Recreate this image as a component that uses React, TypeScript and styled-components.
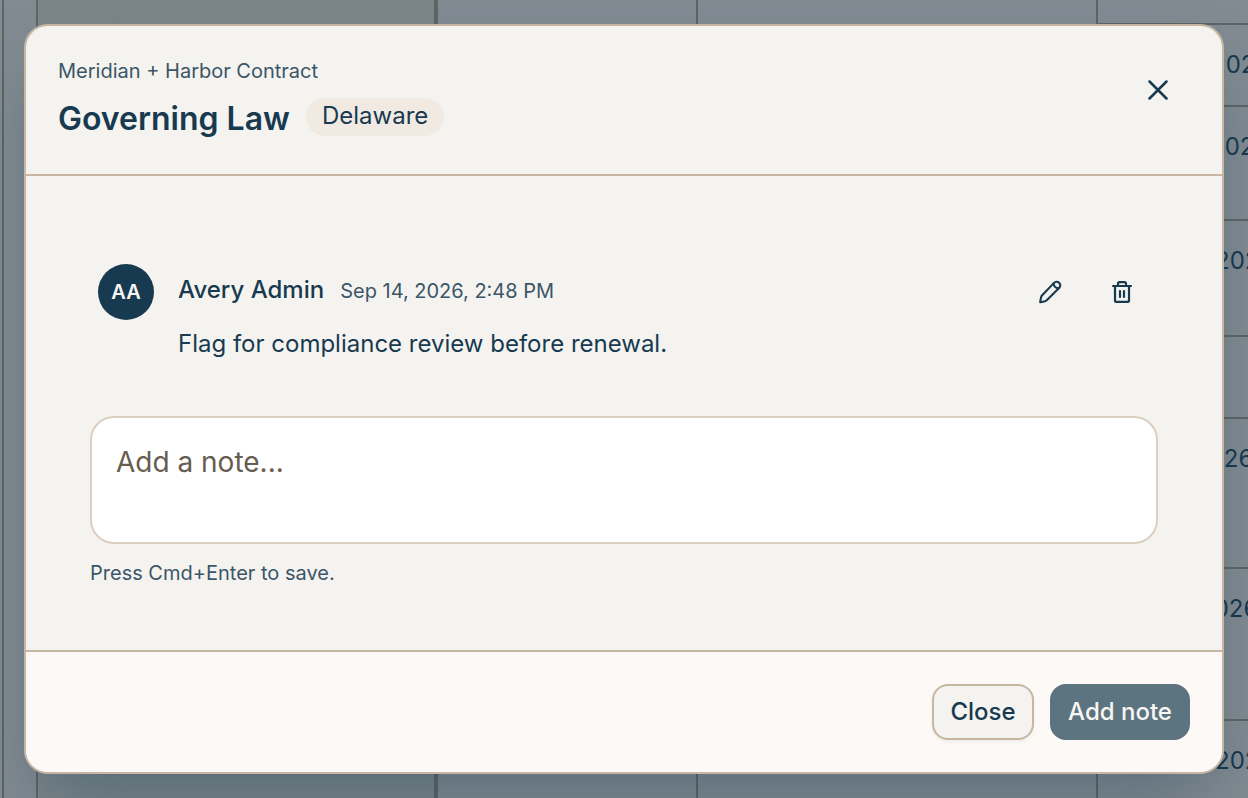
import React from "react";
import styled, { createGlobalStyle } from "styled-components";

const ink = "#173a50";
const line = "#c7b6a3";

const GlobalStyle = createGlobalStyle`
  * { box-sizing: border-box; }
  html, body { margin: 0; padding: 0; overflow: hidden; }
  body { font-family: Inter, sans-serif; color: ${ink}; }
  button { font-family: inherit; cursor: pointer; }
`;

const Screen = styled.div`
  position: relative;
  width: 1248px;
  height: 798px;
  overflow: hidden;
`;

const Sheet = styled.div`
  display: flex;
  width: 1248px;
  height: 798px;
  background: #828b92;
`;

const Column = styled.div<{ $width: number; $rule?: number; $tone?: string }>`
  flex: 0 0 ${(p) => p.$width}px;
  border-right: ${(p) => p.$rule ?? 2}px solid #5f6465;
  background: ${(p) => p.$tone ?? "transparent"};
`;

const DateColumn = styled.div`
  flex: 1;
  min-width: 0;
  overflow: hidden;
`;

const HeadCell = styled.div`
  height: 25px;
  border-bottom: 2px solid #5f6465;
`;

const DateCell = styled.div<{ $height: number; $indent: number }>`
  height: ${(p) => p.$height}px;
  padding: 24px 0 0 ${(p) => p.$indent}px;
  border-bottom: 2px solid #5f6465;
  font-size: 24px;
  line-height: 32px;
  white-space: nowrap;
  color: #17384c;
`;

const Overlay = styled.div`
  position: absolute;
  inset: 0;
  padding: 24px;
`;

const Dialog = styled.section`
  display: flex;
  flex-direction: column;
  width: 1200px;
  height: 750px;
  border: 2px solid ${line};
  border-radius: 24px;
  overflow: hidden;
  background: #f5f3ef;
  box-shadow: 0 36px 72px -14px rgba(23, 58, 80, 0.36);
`;

const Header = styled.header`
  display: flex;
  justify-content: space-between;
  height: 150px;
  padding: 32px 32px 0;
  border-bottom: 2px solid ${line};
`;

const Eyebrow = styled.div`
  font-size: 20px;
  line-height: 26px;
  color: #3a5667;
`;

const TitleRow = styled.div`
  display: flex;
  align-items: flex-start;
  gap: 16px;
  margin-top: 13.5px;
`;

const Title = styled.h1`
  margin: 1px 0 0;
  font-size: 32px;
  line-height: 40px;
  font-weight: 600;
`;

const Chip = styled.span`
  height: 38px;
  padding: 0 16px;
  border-radius: 19px;
  background: #f1eae3;
  font-size: 24px;
  line-height: 36px;
`;

const IconButton = styled.button<{ $size: number }>`
  display: flex;
  align-items: center;
  justify-content: center;
  width: ${(p) => p.$size}px;
  height: ${(p) => p.$size}px;
  padding: 0;
  border: 0;
  background: none;
  color: ${ink};
`;

const Body = styled.div`
  flex: 1;
  padding: 88px 64px 0;
`;

const Note = styled.article`
  display: flex;
  gap: 24px;
  height: 152px;
  padding: 0 8px;
`;

const Avatar = styled.div`
  display: flex;
  align-items: center;
  justify-content: center;
  width: 56px;
  height: 56px;
  border-radius: 50%;
  background: ${ink};
  color: #f8f6f2;
  font-size: 20px;
  font-weight: 600;
`;

const NoteMain = styled.div`
  flex: 1;
`;

const NoteMeta = styled.div`
  display: flex;
  align-items: baseline;
  gap: 16px;
  padding-top: 10px;
  line-height: 32px;
`;

const Author = styled.span`
  font-size: 24px;
  font-weight: 500;
`;

const Stamp = styled.span`
  font-size: 20px;
  color: #3a5667;
`;

const NoteText = styled.p`
  margin: 17px 0 0;
  font-size: 24px;
  line-height: 40px;
`;

const NoteActions = styled.div`
  display: flex;
  gap: 16px;
`;

const NoteField = styled.textarea`
  display: block;
  width: 1068px;
  height: 128px;
  padding: 24px;
  border: 2px solid #dccfc2;
  border-radius: 24px;
  outline: none;
  resize: none;
  background: #fff;
  font-family: inherit;
  font-size: 28px;
  line-height: 40px;
  &::placeholder { color: #675c50; opacity: 1; }
`;

const Hint = styled.div`
  margin-top: 15px;
  font-size: 20px;
  line-height: 28px;
  color: #3a5667;
`;

const Footer = styled.footer`
  display: flex;
  justify-content: flex-end;
  gap: 16px;
  height: 122px;
  padding: 32px;
  border-top: 2px solid ${line};
  background: #fdf9f6;
`;

const Button = styled.button<{ $width: number; $filled?: boolean }>`
  width: ${(p) => p.$width}px;
  height: 56px;
  padding: 0;
  border: 2px solid ${(p) => (p.$filled ? "#5c7380" : line)};
  border-radius: 16px;
  background: ${(p) => (p.$filled ? "#5c7380" : "#f5f3ef")};
  color: ${(p) => (p.$filled ? "#f8f6f2" : ink)};
  box-shadow: ${(p) => (p.$filled ? "none" : "0 2px 4px rgba(23, 58, 80, 0.06)")};
  font-size: 24px;
  line-height: 32px;
  font-weight: 500;
`;

const dates = [
  { height: 82, indent: 113 },
  { height: 114, indent: 112 },
  { height: 116, indent: 117 },
  { height: 82, indent: 0 },
  { height: 150, indent: 96 },
  { height: 152, indent: 101 },
  { height: 110, indent: 117 },
];

const CloseIcon = () => (
  <svg width="20" height="20" viewBox="0 0 20 20" fill="none" stroke="currentColor" strokeWidth="2.5" strokeLinecap="round">
    <path d="M1.5 1.5 18.5 18.5M18.5 1.5 1.5 18.5" />
  </svg>
);

const PencilIcon = () => (
  <svg width="24" height="24" viewBox="0 0 24 24" fill="none" stroke="currentColor" strokeWidth="2.1" strokeLinecap="round" strokeLinejoin="round">
    <path d="M16 2.9a3.4 3.4 0 0 1 5.3 4.9L9 20.1q-.8.8-1.9 1.1L2.6 22.3q-.5 0-.4-.5L3.1 17.2q.3-1 1.1-1.9Z" />
    <path d="M15.6 3.5q.3 4.4 5 4.8" />
  </svg>
);

const TrashIcon = () => (
  <svg width="24" height="24" viewBox="0 0 24 24" fill="none" stroke="currentColor" strokeWidth="2.2" strokeLinecap="round" strokeLinejoin="round">
    <path d="M3 6h18M5 6v14.4a1.4 1.4 0 0 0 1.4 1.4h11.2a1.4 1.4 0 0 0 1.4-1.4V6M8 6V3.8a1.6 1.6 0 0 1 1.6-1.6h4.8A1.6 1.6 0 0 1 16 3.8V6M10 11v6M14 11v6" />
  </svg>
);

export default function App() {
  return (
    <Screen>
      <GlobalStyle />
      <Sheet aria-hidden="true">
        <Column $width={4} />
        <Column $width={34} />
        <Column $width={400} $rule={4} $tone="#7c868a" />
        <Column $width={260} />
        <Column $width={400} />
        <DateColumn>
          <HeadCell />
          {dates.map((d, i) => (
            <DateCell key={i} $height={d.height} $indent={d.indent}>
              {d.indent > 0 ? "2026" : ""}
            </DateCell>
          ))}
        </DateColumn>
      </Sheet>
      <Overlay>
        <Dialog role="dialog" aria-label="Governing Law">
          <Header>
            <div>
              <Eyebrow>Meridian + Harbor Contract</Eyebrow>
              <TitleRow>
                <Title>Governing Law</Title>
                <Chip>Delaware</Chip>
              </TitleRow>
            </div>
            <IconButton $size={64} aria-label="Close dialog">
              <CloseIcon />
            </IconButton>
          </Header>
          <Body>
            <Note>
              <Avatar>AA</Avatar>
              <NoteMain>
                <NoteMeta>
                  <Author>Avery Admin</Author>
                  <Stamp>Sep 14, 2026, 2:48 PM</Stamp>
                </NoteMeta>
                <NoteText>Flag for compliance review before renewal.</NoteText>
              </NoteMain>
              <NoteActions>
                <IconButton $size={56} aria-label="Edit note">
                  <PencilIcon />
                </IconButton>
                <IconButton $size={56} aria-label="Delete note">
                  <TrashIcon />
                </IconButton>
              </NoteActions>
            </Note>
            <NoteField placeholder="Add a note..." />
            <Hint>Press Cmd+Enter to save.</Hint>
          </Body>
          <Footer>
            <Button $width={102}>Close</Button>
            <Button $width={140} $filled>Add note</Button>
          </Footer>
        </Dialog>
      </Overlay>
    </Screen>
  );
}
